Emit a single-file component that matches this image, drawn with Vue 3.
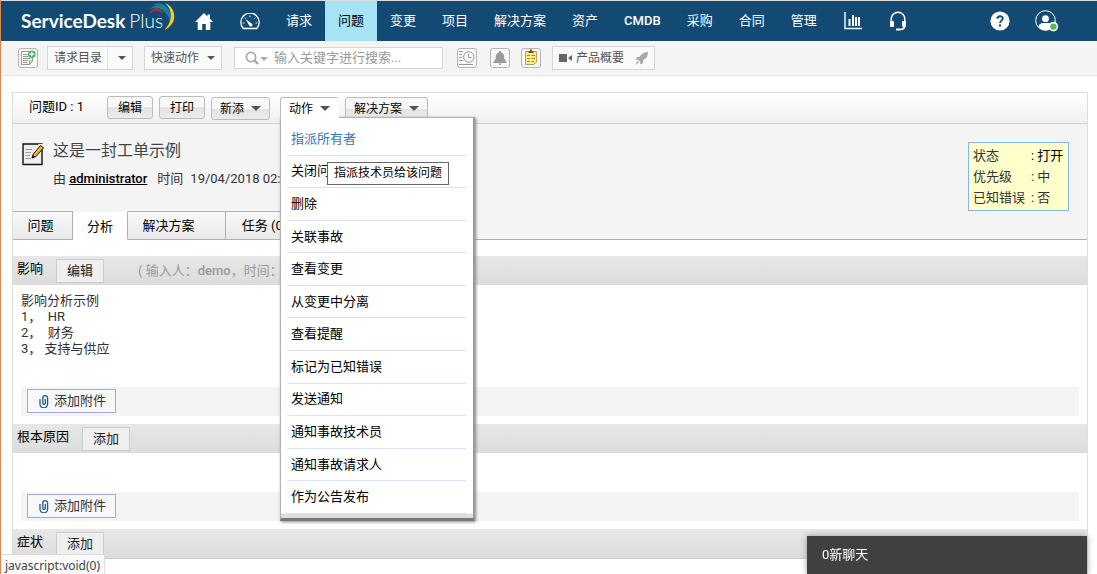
<script setup>
import { ref } from 'vue'

const keyword = ref('')
const navItems = ['请求', '问题', '变更', '项目', '解决方案', '资产', 'CMDB', '采购', '合同', '管理']
const activeNav = '问题'
const actions = [
  '指派所有者', '关闭问题', '删除', '关联事故', '查看变更', '从变更中分离',
  '查看提醒', '标记为已知错误', '发送通知', '通知事故技术员', '通知事故请求人', '作为公告发布',
]
const tabs = [
  { name: '问题', size: 'short' },
  { name: '分析', size: 'current' },
  { name: '解决方案', size: 'long' },
  { name: '任务 (0)', size: 'short' },
]
const facts = [
  { label: '状态', value: '打开' },
  { label: '优先级', value: '中' },
  { label: '已知错误', value: '否' },
]
const impact = '影响分析示例\n1，  HR\n2，  财务\n3， 支持与供应'
const sections = [
  { title: '影响', button: '编辑', note: '( 输入人：', author: 'demo', time: '，时间：', text: impact, size: 'tall' },
  { title: '根本原因', button: '添加', text: '', size: 'low' },
  { title: '症状', button: '添加', last: true },
]
</script>

<template>
  <div class="page">
    <header class="nav">
      <a class="logo" href="#" aria-label="ServiceDesk Plus">
        <span class="logo-bold">ServiceDesk</span><span class="logo-light">Plus</span>
        <svg class="logo-arcs" width="28" height="28" viewBox="0 0 28 28" fill="none">
          <path d="M1 12C4 5 12 4 16 12C11 8 6 8 1 12Z" fill="#b3274e" />
          <path d="M2 7C8 1 18 3 20 15C16 7 9 4 2 7Z" fill="#119a50" />
          <path d="M5 3C14 -2 26 6 22 22C21 11 15 3 5 3Z" fill="#1678c2" />
          <path d="M17 1C29 6 30 22 16 28C25 20 25 8 17 1Z" fill="#f6cf16" />
        </svg>
      </a>
      <a class="nav-icon home" href="#" aria-label="主页">
        <svg width="18" height="17" viewBox="0 0 18 17"><path d="M9 0L12.5 3.4V1.5H15V5.8L18 9H15.3V17H10.8V11H7.2V17H2.7V9H0Z" fill="#fff" /></svg>
      </a>
      <a class="nav-icon gauge" href="#" aria-label="仪表板">
        <svg width="20" height="17" viewBox="0 0 20 17" fill="none" stroke="#fff">
          <path d="M3.2 15.5A9.2 9.2 0 1 1 16.8 15.5Z" stroke-width="1.3" />
          <path d="M10 2.5V4M4.8 4.6L5.8 5.6M15.2 4.6L14.2 5.6M2.8 10H4.4M15.6 10H17.2" />
          <path d="M5.5 6L11.6 10.4A1.7 1.7 0 1 1 9.2 12.5Z" fill="#fff" stroke="none" />
        </svg>
      </a>
      <nav class="links">
        <a v-for="item in navItems" :key="item" href="#" :class="{ active: item === activeNav, latin: item === 'CMDB' }">{{ item }}</a>
      </nav>
      <a class="nav-icon chart" href="#" aria-label="报表">
        <svg width="18" height="18" viewBox="0 0 18 18" fill="none" stroke="#fff">
          <path d="M1 0V16.5H18" stroke-width="1.4" /><path d="M5.5 14V7M9 14V3M12 14V5M15 14V5" stroke-width="2" />
        </svg>
      </a>
      <a class="nav-icon support" href="#" aria-label="支持">
        <svg width="16" height="20" viewBox="0 0 16 20" fill="none" stroke="#fff">
          <path d="M1.2 12V8A6.8 6.8 0 0 1 14.8 8V12" stroke-width="1.5" />
          <rect x="0" y="10" width="4" height="6" rx="1" fill="#fff" stroke="none" />
          <rect x="12" y="10" width="4" height="6" rx="1" fill="#fff" stroke="none" />
          <path d="M14.5 15C14.5 17.5 12 18.5 10 18.5M6 18.5H10.5" stroke-width="1.8" />
        </svg>
      </a>
      <span class="grow"></span>
      <a class="nav-icon help" href="#" aria-label="帮助">
        <svg width="20" height="20" viewBox="0 0 20 20" fill="none">
          <circle cx="10" cy="10" r="9.6" fill="#fff" />
          <path d="M7.4 7.7C7.4 4.4 12.7 4.4 12.7 7.6C12.7 9.7 10.1 9.6 10.1 12" stroke="#134a73" stroke-width="1.9" />
          <rect x="9" y="13.4" width="2.1" height="2.1" fill="#134a73" />
        </svg>
      </a>
      <a class="nav-icon user" href="#" aria-label="用户">
        <svg width="24" height="22" viewBox="0 0 24 22" fill="none">
          <circle cx="10.5" cy="10.5" r="9.8" stroke="#fff" />
          <circle cx="10.5" cy="8.7" r="3.4" fill="#fff" />
          <path d="M3.5 17C4 12.5 8 13 10.5 13S17 12.5 17.5 17C14 21.2 7 21.2 3.5 17Z" fill="#fff" />
          <circle cx="18.4" cy="16.6" r="4.8" fill="#fff" /><circle cx="18.4" cy="16.6" r="3.2" fill="#5cb85c" />
        </svg>
      </a>
    </header>

    <div class="toolbar">
      <button class="tool new" aria-label="新建请求">
        <svg width="18" height="18" viewBox="0 0 18 18" fill="none" stroke="#999">
          <path d="M10 2.5H2.5V15.5H10.5L13.5 12V8" /><path d="M10.5 15.5V12H13.5M4 5.5H8.5M4 7.5H9M4 9.5H11.5M4 11.5H9M4 13.5H8.5" />
          <circle cx="12.8" cy="5.2" r="3.8" fill="#45b058" stroke="none" /><path d="M12.8 2.8V7.6M10.4 5.2H15.2" stroke="#fff" stroke-width="1.4" />
        </svg>
      </button>
      <button class="box catalog"><span>请求目录</span><i class="rule"></i><i class="caret"></i></button>
      <button class="box quick"><span>快速动作</span><i class="caret"></i></button>
      <label class="search">
        <svg width="24" height="14" viewBox="0 0 24 14" fill="none">
          <circle cx="6" cy="6" r="4.6" stroke="#aaa" stroke-width="1.8" /><path d="M9.4 9.4L13 13" stroke="#aaa" stroke-width="2.4" /><path d="M15 6H23L19 10Z" fill="#aaa" />
        </svg>
        <input v-model="keyword" type="text" aria-label="搜索" placeholder="输入关键字进行搜索..." />
      </label>
      <button class="tool recent" aria-label="最近项目">
        <svg width="18" height="18" viewBox="0 0 18 18" fill="none" stroke="#999">
          <circle cx="10.8" cy="8" r="5.2" /><path d="M10.5 4.8V8.4H13.5M1 2.5H5M1 5.5H4M1 8.5H4M1 11.5H5M1 15.5H15" />
        </svg>
      </button>
      <button class="tool bell" aria-label="提醒">
        <svg width="18" height="18" viewBox="0 0 18 18" fill="#999"><path d="M8 2H10V3.5C13 4.2 13.2 6.5 13.2 9.5L15.5 13V14H2.5V13L4.8 9.5C4.8 6.5 5 4.2 8 3.5ZM7.3 14.5H10.7L9 16.5Z" /></svg>
      </button>
      <button class="tool note" aria-label="备忘">
        <svg width="18" height="18" viewBox="0 0 18 18" fill="none">
          <path d="M3.5 2.5H14.5V13L12 15.5H3.5Z" fill="#ffe98a" stroke="#b9a04a" />
          <rect x="6.5" y="2" width="5" height="2" fill="#7b5b20" /><rect x="8" y="0.5" width="2" height="2" fill="#7b5b20" />
          <path d="M5 6.5H8M9.5 6.5H13M5 9.5H8M9.5 9.5H13M5 12.5H8M9.5 12.5H12" stroke="#a08642" />
        </svg>
      </button>
      <button class="box overview">
        <svg width="13" height="8" viewBox="0 0 13 8" fill="#666"><path d="M0 0H8V8H0ZM9 4L13 1V7Z" /></svg>
        <span>产品概要</span><i class="rule"></i>
        <svg width="13" height="13" viewBox="0 0 13 13" fill="#aaa"><path d="M13 0C9 0 6 2 4.5 5H2L0.5 8L3 7.8L5.2 10L5 12.5L8 11V8.5C11 7 13 4 13 0ZM2.8 8.8L0 13L4.2 10.2Z" /></svg>
      </button>
    </div>

    <main class="panel">
      <div class="panel-head">
        <span class="id">问题ID : 1</span>
        <button class="btn plain">编辑</button>
        <button class="btn plain">打印</button>
        <button class="btn add">新添<i class="caret big"></i></button>
        <div class="action-wrap">
          <button class="btn open">动作<i class="caret big"></i></button>
          <div class="menu">
            <ul>
              <li v-for="(a, i) in actions" :key="a"><a href="#" :class="{ hover: i === 0 }">{{ a }}</a></li>
            </ul>
            <div class="tip" role="tooltip">指派技术员给该问题</div>
          </div>
        </div>
        <button class="btn solution">解决方案<i class="caret big"></i></button>
      </div>

      <div class="summary">
        <svg class="problem-icon" width="22" height="24" viewBox="0 0 22 24" fill="none">
          <path d="M1 2H20V22.5H1Z" fill="#eee" stroke="#111" stroke-width="1.4" /><path d="M16 2L21 7V2Z" fill="#f4f4f4" />
          <path d="M3.5 7.5H10M3.5 10.5H9M3.5 13.5H8M3.5 16.5H9" stroke="#999" />
          <path d="M10 16L11 12.5L18.5 3.5L21.5 5.8L14 14.5Z" fill="#f2b51d" stroke="#111" /><path d="M10 16L11 13L13 14.8Z" fill="#111" />
        </svg>
        <div class="heading">
          <h1>这是一封工单示例</h1>
          <p>由 <a href="#">administrator</a><span class="when">时间</span><span>19/04/2018 02:</span></p>
        </div>
        <dl class="facts">
          <template v-for="f in facts" :key="f.label"><dt>{{ f.label }}</dt><dd>: {{ f.value }}</dd></template>
        </dl>
      </div>

      <div class="tabs" role="tablist">
        <button v-for="t in tabs" :key="t.name" role="tab" :class="t.size" :aria-selected="t.size === 'current'">{{ t.name }}</button>
        <span class="tabs-rest"></span>
      </div>

      <section v-for="s in sections" :key="s.title">
        <div class="section-head" :class="{ last: s.last }">
          <h2>{{ s.title }}</h2>
          <button class="small">{{ s.button }}</button>
          <span v-if="s.note" class="note-text">{{ s.note }}<b>{{ s.author }}</b>{{ s.time }}</span>
        </div>
        <template v-if="!s.last">
          <div class="body" :class="s.size">{{ s.text }}</div>
          <div class="attach">
            <button>
              <svg width="10" height="14" viewBox="0 0 10 14" fill="none" stroke="#1d5b92" stroke-width="1.3"><path d="M1 5V10A3.6 3.6 0 0 0 8.6 10V4A2.4 2.4 0 0 0 3.8 4V9.5A1.3 1.3 0 0 0 6.3 9.5V5" /></svg>
              添加附件
            </button>
          </div>
        </template>
      </section>
    </main>

    <button class="chat">0新聊天</button>
    <div class="status">javascript:void(0)</div>
  </div>
</template>

<style>
body { margin: 0; }
</style>

<style scoped>
* { box-sizing: border-box; }
.page {
  min-height: 100vh;
  display: flex;
  flex-direction: column;
  border-left: 1px solid #d98851;
  border-top: 1px solid #dcdcdc;
  background: #fff;
  color: #333;
  font: 13px/20px Roboto, "Noto Sans CJK SC", sans-serif;
}
button, input { font: inherit; color: inherit; margin: 0; padding: 0; }
button { white-space: nowrap; }
a { color: inherit; text-decoration: none; }
h1, h2, p, ul, dl, dd { margin: 0; padding: 0; font-weight: 400; }
svg { display: block; flex: none; }

.nav { display: flex; align-items: center; height: 40px; background: #134a73; color: #fff; }
.logo { position: relative; display: flex; gap: 4px; width: 174px; padding-left: 20px; font: 19px/42px Lato, sans-serif; white-space: nowrap; }
.logo-bold { font-weight: 700; }
.logo-light { font-weight: 300; }
.logo-arcs { position: absolute; left: 147px; top: 2px; }
.home { margin-left: 20px; }
.gauge { margin-left: 27px; margin-right: 13px; }
.links { display: flex; height: 100%; }
.links a { padding: 0 13px; line-height: 40px; white-space: nowrap; }
.links .active { background: #a6e3f5; color: #000; }
.links .latin { font-weight: 500; }
.chart { margin-left: 14px; }
.support { margin-left: 28px; }
.grow { flex: 1; }
.help { margin-right: 25px; }
.user { margin-right: 38px; }

.toolbar { display: flex; align-items: center; height: 35px; padding-left: 17px; background: #f4f4f4; border-bottom: 1px solid #e4e4e4; color: #555; font-size: 12px; }
.tool { width: 20px; height: 20px; display: flex; align-items: center; justify-content: center; border: 1px solid #b5b5b5; border-radius: 3px; background: #f8f8f8; flex: none; }
.box { display: flex; align-items: center; height: 24px; padding: 0 6px; border: 1px solid #d6d6d6; background: #fafafa; }
.rule { width: 1px; height: 22px; background: #e2e2e2; }
.caret { width: 0; height: 0; border: 4px solid transparent; border-top-color: #555; border-bottom: 0; }
.caret.big { border-width: 5px; border-bottom: 0; margin-left: 7px; }
.catalog { width: 86px; margin-left: 9px; }
.catalog .rule { margin: 0 10px 0 5px; }
.quick { width: 78px; margin-left: 11px; justify-content: space-between; }
.search { display: flex; align-items: center; width: 209px; height: 22px; margin-left: 12px; padding-left: 10px; border: 1px solid #d6d6d6; background: #fff; }
.search input { width: 160px; margin-left: 5px; border: 0; outline: 0; background: none; font-size: 13px; }
.search input::placeholder { color: #999; opacity: 1; }
.recent { margin-left: 14px; }
.bell { margin-left: 13px; }
.note { margin-left: 11px; }
.overview { margin-left: 11px; width: 103px; }
.overview span { margin: 0 5px 0 4px; }
.overview .rule { margin-right: 6px; }

.panel { flex: 1; margin: 16px 9px 0 11px; border: 1px solid #dedede; border-bottom: 0; }
.panel-head { display: flex; align-items: flex-start; height: 31px; padding: 3px 0 0 16px; border-bottom: 1px solid #d2d2d2; background: linear-gradient(#fff, #f0f0f0); color: #000; }
.id { width: 78px; line-height: 22px; white-space: nowrap; }
.btn { display: flex; align-items: center; justify-content: center; height: 23px; border: 1px solid #bcbcbc; border-radius: 3px; background: linear-gradient(#f8f8f8 50%, #e3e3e3 50%, #ececec); font-size: 12px; }
.plain { width: 46px; margin-right: 6px; }
.add { width: 59px; margin: 1px 10px 0 0; }
.action-wrap { position: relative; width: 59px; margin: 1px 6px 0 0; }
.open { position: relative; z-index: 2; width: 59px; height: 22px; border-right-color: #fff; border-bottom: 0; border-radius: 3px 3px 0 0; background: #fff; }
.solution { width: 83px; margin-top: 1px; }
.menu { position: absolute; z-index: 1; left: 0; top: 20px; width: 195px; padding: 5px 7px 0 6px; border: 1px solid #b2b2b2; border-right: 2px solid #999; border-bottom: 3px solid #777; background: linear-gradient(#fff 395px, #ddd 396px); box-shadow: 1px 1px 3px #888; }
.menu ul { display: grid; grid-auto-rows: 1fr; height: 395px; padding-bottom: 4px; list-style: none; }
.menu li { display: flex; align-items: center; border-bottom: 1px solid #d5e6fb; }
.menu a { padding-left: 4px; }
.menu .hover { color: #3076b8; }
.tip { position: absolute; left: 46px; top: 44px; padding: 0 6px; border: 1px solid #666; background: #fff; font-size: 12px; line-height: 21px; white-space: nowrap; }

.summary { display: flex; align-items: flex-start; height: 87px; background: #f4f4f4; }
.problem-icon { margin: 18px 9px 0 9px; }
.heading { flex: 1; padding-top: 16px; }
.heading h1 { font-size: 16px; line-height: 22px; color: #444; }
.heading p { margin-top: 7px; line-height: 20px; white-space: nowrap; }
.heading p a { font-weight: 500; color: #000; text-decoration: underline; }
.when { margin: 0 7px 0 10px; }
.facts { display: grid; grid-template-columns: 58px auto; width: 101px; margin: 18px 18px 0 0; padding: 2px 0 2px 4px; border: 1px solid #87b7e5; background: #ffffcb; line-height: 21px; }
.facts dd:first-of-type { color: #000; }

.tabs { display: flex; height: 29px; background: #f4f4f4; color: #000; }
.tabs button { border: solid #b0b0b0; border-width: 1px 1px 1px 0; background: linear-gradient(#f8f8f8, #e9e9e9); }
.tabs .short { width: 60px; padding-right: 4px; }
.tabs .current { width: 55px; border-top-color: #f4f4f4; border-bottom-color: #fff; background: #fff; padding-top: 3px; }
.tabs .long { width: 98px; padding-right: 16px; }
.tabs .short:nth-child(4) { width: 78px; padding: 0; }
.tabs-rest { flex: 1; border-bottom: 1px solid #b0b0b0; }
.tabs + section { margin-top: 16px; }

.section-head { display: flex; align-items: center; height: 29px; padding-left: 4px; background: linear-gradient(#e7e7e7, #dcdcdc); color: #000; }
.section-head h2 { margin-right: 13px; font-size: 13px; line-height: 26px; white-space: nowrap; align-self: flex-start; }
.small { width: 48px; height: 24px; border: 1px solid #ccc; background: #efefef; color: #222; }
.last { height: 30px; border-bottom: 1px solid #ccc; }
.note-text { margin-left: 34px; color: #999; white-space: nowrap; }
.note-text b { font-weight: 500; }
.body { padding: 8px 8px 0; line-height: 16px; white-space: pre-wrap; }
.tall { height: 102px; }
.low { height: 39px; }
.attach { display: flex; align-items: center; height: 29px; margin: 0 8px 8px; padding: 0 6px 1px; background: #f4f4f4; }
.attach button { display: flex; align-items: center; gap: 5px; width: 89px; height: 24px; padding-left: 11px; border: 1px solid #9cb0cd; background: #f8f8f8; }

.chat { position: fixed; right: 10px; bottom: 0; width: 280px; height: 38px; padding-left: 15px; border: 0; background: #404040; color: #fff; text-align: left; box-shadow: 0 0 6px #999; }
.status { position: fixed; left: 1px; bottom: 0; height: 20px; padding: 0 4px; border: solid #ddd; border-width: 1px 1px 0 0; border-top-right-radius: 2px; background: #fafafa; color: #444; font: 12px/22px "Noto Sans", sans-serif; }
</style>
